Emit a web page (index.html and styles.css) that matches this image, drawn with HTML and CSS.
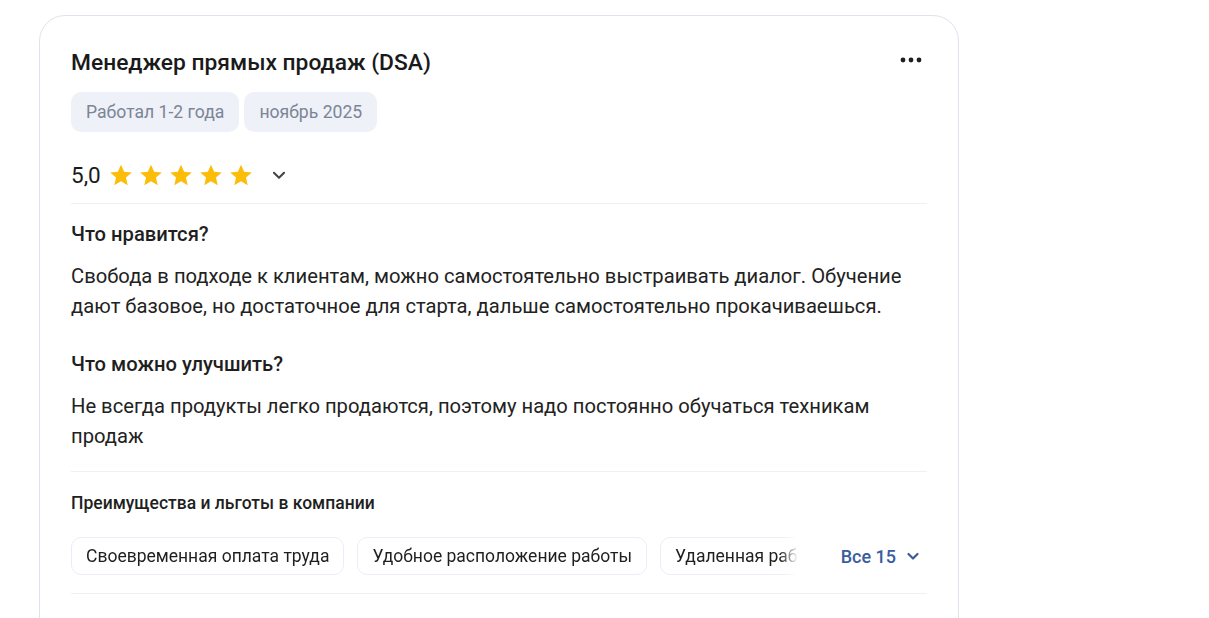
FILE: index.html
```html
<!DOCTYPE html>
<html lang="ru">
<head>
<meta charset="utf-8">
<link rel="stylesheet" href="styles.css">
</head>
<body>
<div class="card">
  <div class="head">
    <h2 class="title">Менеджер прямых продаж (DSA)</h2>
    <button class="more" aria-label="Ещё">
      <svg width="22" height="6" viewBox="0 0 22 6"><circle cx="3" cy="3" r="2.4"/><circle cx="11" cy="3" r="2.4"/><circle cx="19" cy="3" r="2.4"/></svg>
    </button>
  </div>
  <div class="tags">
    <span class="tag">Работал 1-2 года</span>
    <span class="tag">ноябрь 2025</span>
  </div>
  <div class="rating">
    <span class="score">5,0</span>
    <span class="stars">
      <svg viewBox="0 0 24 24"><path d="M12 2.5l2.9 6.6 7.1.6-5.4 4.7 1.6 7-6.2-3.7-6.2 3.7 1.6-7L2 9.7l7.1-.6z"/></svg>
      <svg viewBox="0 0 24 24"><path d="M12 2.5l2.9 6.6 7.1.6-5.4 4.7 1.6 7-6.2-3.7-6.2 3.7 1.6-7L2 9.7l7.1-.6z"/></svg>
      <svg viewBox="0 0 24 24"><path d="M12 2.5l2.9 6.6 7.1.6-5.4 4.7 1.6 7-6.2-3.7-6.2 3.7 1.6-7L2 9.7l7.1-.6z"/></svg>
      <svg viewBox="0 0 24 24"><path d="M12 2.5l2.9 6.6 7.1.6-5.4 4.7 1.6 7-6.2-3.7-6.2 3.7 1.6-7L2 9.7l7.1-.6z"/></svg>
      <svg viewBox="0 0 24 24"><path d="M12 2.5l2.9 6.6 7.1.6-5.4 4.7 1.6 7-6.2-3.7-6.2 3.7 1.6-7L2 9.7l7.1-.6z"/></svg>
    </span>
    <svg class="chev" viewBox="0 0 16 16"><path d="M3.5 6l4.5 4.5L12.5 6"/></svg>
  </div>
  <div class="divider"></div>
  <h3 class="q">Что нравится?</h3>
  <p class="a">Свобода в подходе к клиентам, можно самостоятельно выстраивать диалог. Обучение дают базовое, но достаточное для старта, дальше самостоятельно прокачиваешься.</p>
  <h3 class="q q2">Что можно улучшить?</h3>
  <p class="a">Не всегда продукты легко продаются, поэтому надо постоянно обучаться техникам продаж</p>
  <div class="divider d2"></div>
  <h4 class="bt">Преимущества и льготы в компании</h4>
  <div class="benefits">
    <div class="chips">
      <span class="chip">Своевременная оплата труда</span>
      <span class="chip">Удобное расположение работы</span>
      <span class="chip">Удаленная работа</span>
      <span class="chip">Обучение</span>
    </div>
    <button class="all">Все 15
      <svg viewBox="0 0 16 16"><path d="M3.5 6l4.5 4.5L12.5 6"/></svg>
    </button>
  </div>
  <div class="divider d3"></div>
</div>
</body>
</html>
```
FILE: styles.css
```css
* { box-sizing: border-box; }
body {
  margin: 0;
  background: #fff;
  font-family: Roboto, "Liberation Sans", Arial, sans-serif;
  color: #1f1f1f;
  overflow: hidden;
}
.card {
  margin: 15px 0 0 39px;
  width: 920px;
  height: 640px;
  border: 1px solid #dfe3eb;
  border-radius: 26px;
  padding: 33px 31px 0 31px;
  background: #fff;
}
.head {
  display: flex;
  justify-content: space-between;
  align-items: center;
}
.title {
  margin: 0;
  font-size: 22.8px;
  line-height: 28px;
  font-weight: 500;
  color: #1a1a1a;
}
.more {
  border: 0;
  background: none;
  padding: 0;
  margin-right: 5px;
  display: flex;
  margin-top: -6px;
}
.more svg { width: 22px; height: 6px; fill: #1f1f1f; }
.tags {
  display: flex;
  gap: 5px;
  margin-top: 15px;
}
.tag {
  height: 40px;
  line-height: 40px;
  padding: 0 15px;
  border-radius: 10px;
  background: #eef1f8;
  color: #7b8596;
  font-size: 17.6px;
}
.rating {
  display: flex;
  align-items: center;
  height: 32px;
  margin-top: 27px;
}
.score {
  font-size: 22.5px;
  line-height: 32px;
  color: #1a1a1a;
  margin-right: 7px;
}
.stars { display: flex; gap: 4px; }
.stars svg { width: 26px; height: 26px; fill: #fcbd0a; }
.chev {
  width: 18px;
  height: 18px;
  margin-left: 16px;
  fill: none;
  stroke: #444;
  stroke-width: 1.8;
  stroke-linecap: round;
  stroke-linejoin: round;
}
.divider {
  height: 1px;
  background: #eef0f5;
  margin-top: 12px;
}
.q {
  margin: 17px 0 0;
  font-size: 20.2px;
  line-height: 26px;
  font-weight: 500;
  color: #1f1f1f;
}
.q2 { margin-top: 30px; }
.a {
  margin: 14px 0 0;
  font-size: 20.2px;
  line-height: 30px;
  color: #222;
}
.d2 { margin-top: 20px; }
.bt {
  margin: 19px 0 0;
  font-size: 17.5px;
  line-height: 24px;
  font-weight: 500;
  color: #1f1f1f;
}
.benefits {
  display: flex;
  align-items: center;
  margin-top: 22px;
}
.chips {
  flex: 1;
  min-width: 0;
  display: flex;
  gap: 13px;
  overflow: hidden;
  white-space: nowrap;
  -webkit-mask-image: linear-gradient(to right, #000 calc(100% - 24px), transparent calc(100% - 6px));
  mask-image: linear-gradient(to right, #000 calc(100% - 24px), transparent calc(100% - 6px));
}
.chip {
  flex: none;
  height: 38px;
  line-height: 36px;
  padding: 0 14px;
  border: 1px solid #e9edf6;
  border-radius: 10px;
  font-size: 17.5px;
  color: #1f1f1f;
}
.all {
  flex: none;
  display: flex;
  align-items: center;
  gap: 9px;
  border: 0;
  background: none;
  padding: 0 6px 0 0;
  margin-left: 37px;
  font-family: inherit;
  font-size: 18px;
  font-weight: 500;
  color: #3a5c9c;
}
.all svg {
  width: 16px;
  height: 16px;
  fill: none;
  stroke: #3a5c9c;
  stroke-width: 2.2;
  stroke-linecap: round;
  stroke-linejoin: round;
}
.d3 { margin-top: 18px; }
```
